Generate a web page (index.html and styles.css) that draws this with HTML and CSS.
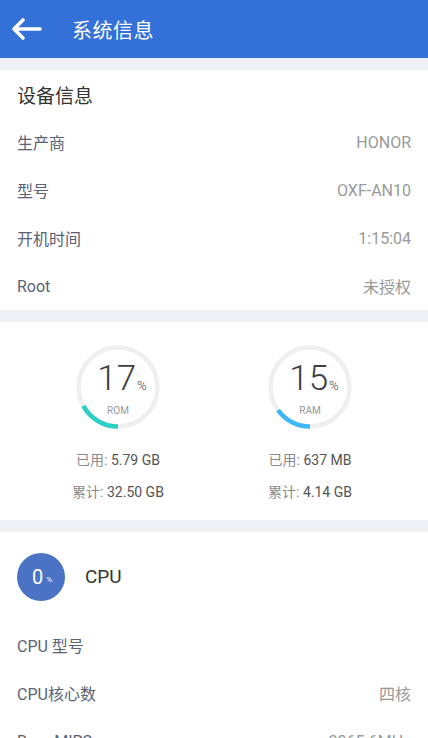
FILE: index.html
```html
<!DOCTYPE html>
<html lang="zh-CN">
<head>
    <meta charset="UTF-8">
    <meta name="viewport" content="width=device-width, initial-scale=1.0">
    <title>系统信息</title>
    <link rel="stylesheet" href="styles.css">
</head>
<body>
    <header class="topbar">
        <a href="#" class="back">
            <svg width="32" height="24" viewBox="0 0 32 24">
                <path d="M30 12H4M13 3L4 12l9 9" fill="none" stroke="#fff" stroke-width="3.6" stroke-linecap="round" stroke-linejoin="round"/>
            </svg>
        </a>
        <h1>系统信息</h1>
    </header>

    <main>
        <section class="card">
            <h2 class="card-title">设备信息</h2>
            <div class="row"><span class="label">生产商</span><span class="value">HONOR</span></div>
            <div class="row"><span class="label">型号</span><span class="value">OXF-AN10</span></div>
            <div class="row"><span class="label">开机时间</span><span class="value">1:15:04</span></div>
            <div class="row"><span class="label">Root</span><span class="value">未授权</span></div>
        </section>

        <section class="card storage">
            <div class="gauge">
                <div class="ring">
                    <svg width="86" height="86" viewBox="0 0 86 86">
                        <circle cx="43" cy="43" r="39.5" class="track"/>
                        <circle cx="43" cy="43" r="39.5" class="bar rom" stroke-dasharray="42.2 248.2" transform="rotate(90 43 43)"/>
                    </svg>
                    <div class="ring-text">
                        <div class="pct">17<small>%</small></div>
                        <div class="tag">ROM</div>
                    </div>
                </div>
                <p class="stat"><span>已用:</span> 5.79 GB</p>
                <p class="stat"><span>累计:</span> 32.50 GB</p>
            </div>
            <div class="gauge">
                <div class="ring">
                    <svg width="86" height="86" viewBox="0 0 86 86">
                        <circle cx="43" cy="43" r="39.5" class="track"/>
                        <circle cx="43" cy="43" r="39.5" class="bar ram" stroke-dasharray="37.2 248.2" transform="rotate(90 43 43)"/>
                    </svg>
                    <div class="ring-text">
                        <div class="pct">15<small>%</small></div>
                        <div class="tag">RAM</div>
                    </div>
                </div>
                <p class="stat"><span>已用:</span> 637 MB</p>
                <p class="stat"><span>累计:</span> 4.14 GB</p>
            </div>
        </section>

        <section class="card">
            <div class="cpu-head">
                <div class="cpu-badge">0<small>%</small></div>
                <span class="cpu-name">CPU</span>
            </div>
            <div class="row"><span class="label">CPU 型号</span><span class="value"></span></div>
            <div class="row"><span class="label">CPU核心数</span><span class="value">四核</span></div>
            <div class="row"><span class="label">BogoMIPS</span><span class="value">3865.6MHz</span></div>
        </section>
    </main>
</body>
</html>
```

FILE: styles.css
```css
* {
    box-sizing: border-box;
    margin: 0;
    padding: 0;
}
body {
    font-family: Roboto, "Noto Sans CJK SC", sans-serif;
    background-color: #eff0f5;
    color: #333;
    overflow: hidden;
}
.topbar {
    height: 58px;
    background-color: #3370d7;
    display: flex;
    align-items: center;
    padding-left: 10px;
}
.back {
    display: flex;
    width: 32px;
    height: 24px;
}
.topbar h1 {
    font-size: 20px;
    font-weight: 400;
    color: #fff;
    margin-left: 30px;
    letter-spacing: 0.5px;
}
main {
    padding-top: 12px;
}
.card {
    background-color: #fff;
    margin-bottom: 12px;
}
.card-title {
    height: 48px;
    display: flex;
    align-items: center;
    padding-left: 17px;
    font-size: 19px;
    font-weight: 400;
    color: #333;
}
.row {
    height: 48px;
    display: flex;
    justify-content: space-between;
    align-items: center;
    padding: 0 17px;
    font-size: 16px;
}
.label {
    color: #5a6276;
}
.value {
    color: #999;
}
.storage {
    display: flex;
    justify-content: center;
    gap: 52px;
    height: 198px;
    padding-top: 22px;
}
.gauge {
    width: 140px;
    display: flex;
    flex-direction: column;
    align-items: center;
}
.ring {
    position: relative;
    width: 86px;
    height: 86px;
    margin-bottom: 14px;
}
.ring svg {
    display: block;
}
.track {
    fill: none;
    stroke: #efefef;
    stroke-width: 4.5;
}
.bar {
    fill: none;
    stroke-width: 4.5;
}
.bar.rom {
    stroke: #2ccfc5;
}
.bar.ram {
    stroke: #3cb8f6;
}
.ring-text {
    position: absolute;
    inset: 0;
    display: flex;
    flex-direction: column;
    align-items: center;
    justify-content: center;
    padding-top: 2px;
}
.pct {
    font-size: 35px;
    font-weight: 300;
    line-height: 36px;
    color: #404040;
    padding-left: 8px;
}
.pct small {
    font-size: 13px;
    margin-left: 1px;
}
.tag {
    font-size: 10px;
    color: #999;
    margin-top: 1px;
}
.stat {
    font-size: 14px;
    line-height: 32px;
    color: #555;
}
.stat span {
    color: #8a8a8a;
}
.cpu-head {
    height: 89px;
    display: flex;
    align-items: center;
    padding-left: 17px;
}
.cpu-badge {
    width: 48px;
    height: 48px;
    border-radius: 50%;
    background-color: #4a73c6;
    color: #fff;
    font-size: 20px;
    display: flex;
    align-items: center;
    justify-content: center;
    padding-left: 2px;
}
.cpu-badge small {
    font-size: 8px;
    margin-left: 3px;
    margin-top: 6px;
}
.cpu-name {
    font-size: 19px;
    color: #333;
    margin-left: 20px;
}
```
